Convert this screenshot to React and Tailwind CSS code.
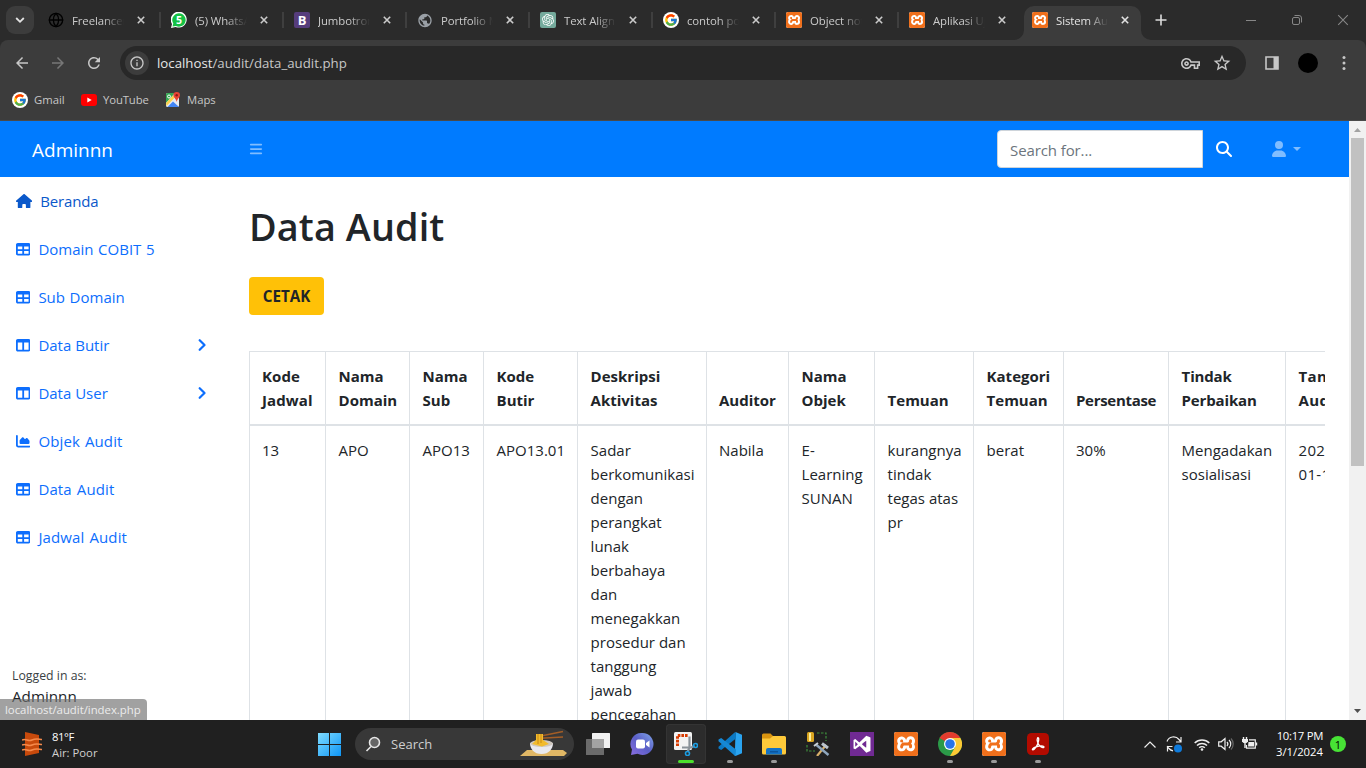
import React from 'react';
import { Globe } from 'lucide-react';
import { FcGoogle } from 'react-icons/fc';
import {
  MdPublic, MdArrowBack, MdArrowForward, MdRefresh, MdInfoOutline, MdOutlineVpnKey, MdStarBorder,
} from 'react-icons/md';
import { FaHouse, FaTable, FaTableColumns, FaChartArea, FaBars, FaMagnifyingGlass, FaUser } from 'react-icons/fa6';
import { SiXampp, SiOpenai } from 'react-icons/si';
import { DiVisualstudio } from 'react-icons/di';

function Xampp({ className }) {
  return (
    <span className={`flex items-center justify-center overflow-hidden bg-white ${className}`}>
      <SiXampp className="h-full w-full scale-[1.02] text-[#f0701c]" />
    </span>
  );
}

function GoogleDisc() {
  return (
    <span className="flex h-4 w-4 items-center justify-center rounded-full bg-white">
      <FcGoogle className="h-[14px] w-[14px]" />
    </span>
  );
}

function Whatsapp() {
  return (
    <svg viewBox="0 0 16 16" className="h-4 w-4">
      <path d="M0 16l1-4A8 8 0 1 1 4.600 15z" fill="#fff" />
      <path d="M1.500 14.600l.8-3A6.700 6.700 0 1 1 5 14z" fill="#14c144" />
      <text x="8.100" y="11.800" textAnchor="middle" fontSize="10.500" fontWeight="700" fontFamily="Open Sans, sans-serif" fill="#fff">5</text>
    </svg>
  );
}

const tabs = [
  { title: 'Freelancer', icon: <Globe className="h-4 w-4 text-black" strokeWidth={2} /> },
  { title: '(5) WhatsApp', icon: <Whatsapp /> },
  {
    title: 'Jumbotron',
    icon: <span className="flex h-4 w-4 items-center justify-center rounded-[2px] bg-[#563d7c] text-[13px] leading-none font-bold text-white">B</span>,
  },
  { title: 'Portfolio Me', icon: <MdPublic className="h-[17px] w-[17px] text-[#9aa0a6]" /> },
  {
    title: 'Text Align',
    icon: <span className="flex h-4 w-4 items-center justify-center rounded-[2px] bg-[#74aa9c]"><SiOpenai className="h-3 w-3 text-white" /></span>,
  },
  { title: 'contoh port', icon: <GoogleDisc /> },
  { title: 'Object not f', icon: <Xampp className="h-4 w-4 rounded-[2px]" /> },
  { title: 'Aplikasi Uji', icon: <Xampp className="h-4 w-4 rounded-[2px]" /> },
  { title: 'Sistem Audit', icon: <Xampp className="h-4 w-4 rounded-[2px]" />, active: true },
];

function Cross({ className }) {
  return (
    <svg viewBox="0 0 10 10" className={className} fill="none" stroke="currentColor">
      <path d="M1 1l8 8M9 1l-8 8" />
    </svg>
  );
}

function Tab({ tab, last }) {
  return (
    <div className={`relative mt-[6px] flex h-[34px] w-[123px] shrink-0 pb-[6px] ${tab.active ? 'text-[#e3e3e3]' : 'text-[#cbcbcb]'}`}>
      {tab.active && (
        <div className="absolute top-0 left-[-16px] flex h-[34px] w-[149px] items-end">
          <svg viewBox="0 0 10 10" className="ml-[6px] h-[10px] w-[10px] shrink-0"><path d="M10 0A10 10 0 0 1 0 10h10z" fill="#3c3c3c" /></svg>
          <span className="h-full w-[117px] rounded-t-[10px] bg-[#3c3c3c]" />
          <svg viewBox="0 0 10 10" className="h-[10px] w-[10px] shrink-0"><path d="M0 0A10 10 0 0 0 10 10H0z" fill="#3c3c3c" /></svg>
        </div>
      )}
      <div className="relative flex w-full items-center pl-2">
        <span className="flex h-4 w-4 items-center justify-center">{tab.icon}</span>
        <span className="ml-2 w-[52px] overflow-hidden pt-[2px] text-[11.4px] tracking-[-0.1px] whitespace-nowrap [mask-image:linear-gradient(to_right,black_60%,transparent_100%)]">{tab.title}</span>
        <Cross className="mr-px ml-[13px] h-2 w-2 stroke-[2]" />
        {!tab.active && !last && <span className="ml-[13px] h-4 w-[2px] bg-[#3f3f3f]" />}
        {!tab.active && last && <span className="ml-[13px] h-4 w-[2px] bg-[#2b2b2b]" />}
      </div>
    </div>
  );
}

function TabStrip() {
  return (
    <div className="flex h-10 w-full shrink-0 bg-[#2b2b2b] text-[#c7c7c7]">
      <span className="mt-[6px] ml-[6px] flex h-7 w-7 shrink-0 items-center justify-center rounded-[9px] bg-[#3c3c3c]">
        <svg viewBox="0 0 10 10" className="h-[10px] w-[10px]" fill="none" stroke="#e3e3e3" strokeWidth="1.800"><path d="M1.200 3l3.800 3.800L8.800 3" /></svg>
      </span>
      <div className="ml-[6px] flex">
        {tabs.map((t, i) => <Tab key={t.title} tab={t} last={i === tabs.length - 2} />)}
      </div>
      <svg viewBox="0 0 12 12" className="mt-[14px] ml-[8px] h-3 w-3" stroke="#dcdcdc" strokeWidth="1.600"><path d="M6 .5v11M.5 6h11" /></svg>
      <div className="mt-[14px] mr-[17px] ml-auto flex items-center gap-[34px] self-start text-[#878787]">
        <span className="mr-px h-px w-[10px] bg-current" />
        <svg viewBox="0 0 12 12" className="h-3 w-3" fill="none" stroke="currentColor"><rect x="1.500" y="3.500" width="7" height="7" rx="1.500" /><path d="M3.500 1.500H8A2.500 2.500 0 0 1 10.500 4v4.500" /></svg>
        <Cross className="h-3 w-3 stroke-[0.9]" />
      </div>
    </div>
  );
}

function Toolbar() {
  return (
    <div className="bg-[#2b2b2b]">
      <div className="flex h-[46px] items-start rounded-t-[8px] bg-[#3c3c3c] pt-[6px] text-[#c7c7c7]">
        <div className="flex h-[34px] w-[120px] items-center gap-[18px] pl-[13px]">
          <MdArrowBack className="h-[18px] w-[18px]" />
          <MdArrowForward className="h-[18px] w-[18px] text-[#777]" />
          <MdRefresh className="h-[18px] w-[18px]" />
        </div>
        <div className="flex h-[34px] w-[1126px] items-center rounded-full bg-[#282828] pr-[14px] pl-[5px]">
          <span className="flex h-6 w-6 items-center justify-center rounded-full bg-[#3c3c3c]"><MdInfoOutline className="h-4 w-4" /></span>
          <span className="ml-2 pt-px text-[13.25px] text-[#c7c7c7]"><span className="text-[#e6e6e6]">localhost</span>/audit/data_audit.php</span>
          <MdOutlineVpnKey className="ml-auto h-[19px] w-[19px]" />
          <MdStarBorder className="ml-[12px] h-5 w-5" />
        </div>
        <div className="flex h-[34px] flex-1 items-center pl-[19px]">
          <svg viewBox="0 0 14 14" className="h-[14px] w-[14px]"><path d="M1 1h12v12H1z" fill="none" stroke="currentColor" strokeWidth="1.600" /><path d="M8.500 1H13v12H8.500z" fill="currentColor" /></svg>
          <span className="ml-[19px] h-5 w-5 rounded-full bg-black" />
          <svg viewBox="0 0 4 16" className="ml-[24px] h-4 w-1" fill="currentColor"><circle cx="2" cy="2.500" r="1.500" /><circle cx="2" cy="8" r="1.500" /><circle cx="2" cy="13.500" r="1.500" /></svg>
        </div>
      </div>
      <div className="flex h-[35px] items-center border-b border-[#4a4a4a] bg-[#3c3c3c] pb-[6px] pl-3 text-[11.3px] text-[#c7c7c7]">
        <GoogleDisc />
        <span className="ml-[6px] w-[47px]">Gmail</span>
        <svg viewBox="0 0 16 12" className="h-3 w-4"><rect width="16" height="12" rx="3" fill="#f00" /><path d="M6.300 3.500v5L10.700 6z" fill="#fff" /></svg>
        <span className="ml-[6px] w-[62px] tracking-[-0.1px]">YouTube</span>
        <svg viewBox="0 0 16 16" className="h-4 w-4">
          <rect x="1" y="1" width="13" height="14" rx="1.500" fill="#e8eaed" />
          <path d="M1 2.500A1.500 1.500 0 0 1 2.500 1H10L1 11z" fill="#34a853" />
          <path d="M2.500 15L8 9.500l6 5.500z" fill="#4285f4" />
          <path d="M1 11l7-7.500 2 2L1.500 14z" fill="#fbd24b" />
          <circle cx="4" cy="4.500" r="1.500" fill="none" stroke="#fff" />
          <path d="M11.700 0a3.300 3.300 0 0 0-3.300 3.300C8.400 5.500 11 6.500 11.700 10c.7-3.500 3.300-4.500 3.300-6.700A3.300 3.300 0 0 0 11.700 0z" fill="#ea4335" /><circle cx="11.700" cy="3.300" r="1.200" fill="#8c1d14" />
        </svg>
        <span className="ml-[6px]">Maps</span>
      </div>
    </div>
  );
}

function Navbar() {
  return (
    <nav className="flex h-14 shrink-0 items-center bg-[#007bff]">
      <span className="w-[249px] pt-[2px] pl-8 text-[19px] text-white">Adminnn</span>
      <FaBars className="h-[14px] w-[14px] text-white/50" />
      <div className="ml-auto flex h-[38px] w-[206px] items-center rounded-l-[4px] border border-[#ced4da] bg-white pt-[2px] pl-3 text-[15px] tracking-[-0.1px] text-[#6c757d]">Search for...</div>
      <FaMagnifyingGlass className="ml-[13px] h-4 w-4 text-white" />
      <FaUser className="ml-[39px] h-4 w-4 text-white/50" />
      <svg viewBox="0 0 8 4" className="mr-[48px] ml-[6px] h-1 w-2"><path d="M0 0h8L4 4z" fill="#fff" fillOpacity=".5" /></svg>
    </nav>
  );
}

const menu = [
  { label: 'Beranda', Icon: FaHouse, home: true },
  { label: 'Domain COBIT 5', Icon: FaTable },
  { label: 'Sub Domain', Icon: FaTable },
  { label: 'Data Butir', Icon: FaTableColumns, sub: true },
  { label: 'Data User', Icon: FaTableColumns, sub: true },
  { label: 'Objek Audit', Icon: FaChartArea, audit: true },
  { label: 'Data Audit', Icon: FaTable, audit: true },
  { label: 'Jadwal Audit', Icon: FaTable, audit: true },
];

function Sidebar() {
  return (
    <aside className="relative flex w-[225px] shrink-0 flex-col">
      {menu.map(({ label, Icon, home, sub, audit }) => (
        <a key={label} className={`flex h-12 items-center pl-4 text-[15px] ${home ? 'tracking-[-0.15px] text-[#0a58ca]' : 'text-[#0d6efd]'} ${audit ? 'tracking-[0.12px] [word-spacing:1px]' : ''} ${!audit && !sub ? '[word-spacing:0.7px]' : ''}`}>
          <Icon className={`mr-2 h-[14.4px] ${home ? 'w-[16.2px]' : 'w-[14.4px]'}`} />
          {label}
          {sub && <svg viewBox="0 0 8 12" className="mr-[19px] ml-auto h-3 w-2" fill="none" stroke="currentColor" strokeWidth="2.200" strokeLinecap="round" strokeLinejoin="round"><path d="M1.700 1.200L6.500 6l-4.800 4.800" /></svg>}
        </a>
      ))}
      <div className="mt-auto pb-3 pl-3 text-[#212529]">
        <div className="pt-[3px] text-[12.3px] leading-[17px] text-[#3a3f44]">Logged in as:</div>
        <div className="text-[15.2px] leading-6">Adminnn</div>
      </div>
      <div className="absolute bottom-0 left-0 flex h-[21px] w-[147px] items-center rounded-tr-[4px] bg-[#6e6e6e]/65 pl-[5px] text-[11.4px] tracking-[-0.03px] whitespace-nowrap text-[#ececec]">localhost/audit/index.php</div>
    </aside>
  );
}

const columns = [
  { w: 'w-[76px]', head: ['Kode', 'Jadwal'], cell: ['13'], tight: 'tracking-[0.1px]' },
  { w: 'w-[84px]', head: ['Nama', 'Domain'], cell: ['APO'] },
  { w: 'w-[74px]', head: ['Nama', 'Sub'], cell: ['APO13'] },
  { w: 'w-[94px]', head: ['Kode', 'Butir'], cell: ['APO13.01'] },
  { w: 'w-[129px]', head: ['Deskripsi', 'Aktivitas'], cell: ['Sadar', 'berkomunikasi', 'dengan', 'perangkat', 'lunak', 'berbahaya', 'dan', 'menegakkan', 'prosedur dan', 'tanggung', 'jawab', 'pencegahan'] },
  { w: 'w-[82px]', head: ['Auditor'], cell: ['Nabila'], pad: 'pl-3' },
  { w: 'w-[86px]', head: ['Nama', 'Objek'], cell: ['E-', 'Learning', 'SUNAN'] },
  { w: 'w-[99px]', head: ['Temuan'], cell: ['kurangnya', 'tindak', 'tegas atas', 'pr'] },
  { w: 'w-[90px]', head: ['Kategori', 'Temuan'], cell: ['berat'] },
  { w: 'w-[105px]', head: ['Persentase'], cell: ['30%'], tight: 'tracking-[-0.3px]', pad: 'pl-3' },
  { w: 'w-[117px]', head: ['Tindak', 'Perbaikan'], cell: ['Mengadakan', 'sosialisasi'], tight: 'tracking-[-0.15px]' },
  { w: 'w-[100px]', head: ['Tanggal', 'Audit'], cell: ['2024-', '01-16'], tight: 'tracking-[0.3px]' },
];

function AuditTable() {
  return (
    <div className="mt-9 overflow-hidden">
      <table className="w-[1136px] table-fixed border-separate border-spacing-0 text-left text-[15px] leading-6 whitespace-nowrap text-[#212529]">
        <colgroup>{columns.map((c, i) => <col key={i} className={c.w} />)}</colgroup>
        <thead>
          <tr>
            {columns.map((c, i) => (
              <th key={i} className={`border-t border-b-2 border-l border-[#dee2e6] py-3 align-bottom font-bold ${i === 0 ? 'pl-3' : c.pad || 'pl-[12.6px]'} ${c.tight || ''}`}>
                {c.head.map((l) => <div key={l}>{l}</div>)}
              </th>
            ))}
          </tr>
        </thead>
        <tbody>
          <tr>
            {columns.map((c, i) => (
              <td key={i} className={`border-l border-[#dee2e6] py-3 align-top ${i === 0 ? 'pl-3' : c.pad || 'pl-[12.6px]'} ${i > 10 ? 'tracking-[0.3px]' : ''}`}>
                {c.cell.map((l) => <div key={l}>{l}</div>)}
              </td>
            ))}
          </tr>
        </tbody>
      </table>
    </div>
  );
}

function Scrollbar() {
  return (
    <div className="flex w-[17px] shrink-0 flex-col items-center bg-[#f1f1f1]">
      <svg viewBox="0 0 17 17" className="h-[17px] w-[17px]"><path d="M5 11l3.500-4 3.500 4z" fill="#a3a3a3" /></svg>
      <span className="h-[328px] w-[13px] bg-[#c1c1c1]" />
      <svg viewBox="0 0 17 17" className="mt-auto h-[17px] w-[17px]"><path d="M5 6l3.500 4L12 6z" fill="#505050" /></svg>
    </div>
  );
}

function Chat() {
  return (
    <svg viewBox="0 0 24 24" className="h-6 w-6">
      <defs><linearGradient id="chat" x1="0" y1="1" x2="1" y2="0"><stop stopColor="#8a6ee0" /><stop offset=".5" stopColor="#5b5fc7" /><stop offset="1" stopColor="#7fa5e8" /></linearGradient></defs>
      <path d="M12.500 1a11 11 0 1 1-5 20.800L1 23l1-5.500A11 11 0 0 1 12.500 1z" fill="url(#chat)" />
      <rect x="6" y="7.500" width="9" height="9" rx="2" fill="#fff" /><path d="M16 11l3.500-2.500v7L16 13z" fill="#fff" />
    </svg>
  );
}

function Snip() {
  return (
    <svg viewBox="0 0 24 24" className="h-6 w-6">
      <rect x="0" y="0" width="18" height="18" rx="1.500" fill="#f3f3f3" />
      <path d="M3.500 14V3.500H14" fill="none" stroke="#d83b01" strokeWidth="3" strokeDasharray="2.600 1" />
      <path d="M15.500 4.500v11L13.500 20M8 15.500h9.500l3-2" fill="none" stroke="#8a9299" strokeWidth="2.200" />
      <circle cx="13.500" cy="21.500" r="2" fill="none" stroke="#1b9de2" strokeWidth="1.600" /><circle cx="21.500" cy="13.500" r="2" fill="none" stroke="#1b9de2" strokeWidth="1.600" />
    </svg>
  );
}

function Code() {
  return (
    <svg viewBox="0 0 24 24" className="h-6 w-6">
      <path d="M17.500 0L24 2.800v18.400L17.500 24l-1.200-.8L17 17z" fill="#2aa4f0" />
      <path d="M16.300.8L17.500 0l.5 6.500L3.200 18 .5 16.500v-1.800z" fill="#0b79c4" />
      <path d="M.5 7.500L3.200 6 18 17.500l-.5 6.500-1.200-.8L.5 9.300z" fill="#1688d4" />
    </svg>
  );
}

function Explorer() {
  return (
    <svg viewBox="0 0 24 24" className="h-6 w-6">
      <path d="M0 3a1.500 1.500 0 0 1 1.500-1.500h7L11 4v4H0z" fill="#d99410" />
      <path d="M0 6.500h8L11 4h11.500A1.500 1.500 0 0 1 24 5.500V21a1.500 1.500 0 0 1-1.500 1.500h-21A1.500 1.500 0 0 1 0 21z" fill="#fdc93a" />
      <path d="M4 22.500V18a2 2 0 0 1 2-2h12a2 2 0 0 1 2 2v4.500z" fill="#1372c5" /><path d="M8 19h8v1.500H8z" fill="#0b559c" />
    </svg>
  );
}

function DbTools() {
  return (
    <svg viewBox="0 0 24 24" className="h-6 w-6">
      <rect x="1" y="0" width="7" height="10" rx="1.500" fill="#d9a520" /><path d="M3 1h2v8H3z" fill="#ffef9c" />
      <path d="M11 1h9v8M1 13v6h8" fill="none" stroke="#3f8f3d" strokeWidth="1.200" strokeDasharray="2.500 1.500" />
      <path d="M11 24l9-11" stroke="#d8b06a" strokeWidth="2.200" /><path d="M10.500 13l12 10" stroke="#8fa6bd" strokeWidth="2.400" />
      <path d="M16 11.500l6 4.500" stroke="#b9c3cd" strokeWidth="3" /><path d="M8 14l4-3" stroke="#c9d0d7" strokeWidth="2" />
    </svg>
  );
}

function Chrome() {
  return (
    <svg viewBox="0 0 24 24" className="h-6 w-6">
      <circle cx="12" cy="12" r="12" fill="#2b9a48" />
      <path d="M12 12L1.600 6A12 12 0 0 1 22.400 6z" fill="#e33b2e" />
      <path d="M12 6h10.400A12 12 0 0 1 12 24l5.200-9z" fill="#fcc934" />
      <circle cx="12" cy="12" r="6" fill="#fff" /><circle cx="12" cy="12" r="4.800" fill="#2a74e8" />
    </svg>
  );
}

function Acrobat() {
  return (
    <svg viewBox="0 0 22 22" className="h-[22px] w-[22px]">
      <rect width="22" height="22" rx="4.500" fill="#b30b00" />
      <path d="M10.600 4.800c1.600-.6 1.300 2.600.4 5.200-.9 2.700-3.400 6.800-5 6.900-1.600-.2 0-2.200 3-3.100 3-.9 7-1.200 7.900-.1.500 1.200-2 1.200-3.800-.5-1.800-1.600-3.900-5.800-2.500-8.400z" fill="none" stroke="#fff" strokeWidth="1.300" />
    </svg>
  );
}

const apps = [
  { icon: <svg viewBox="0 0 24 24" className="h-6 w-6"><rect x="6" y="1" width="18" height="15" rx=".5" fill="#f0f0f0" /><rect x="0" y="7" width="18" height="16" rx=".5" fill="#6b6b6b" /><path d="M6 7h12v9H6z" fill="#a3a3a3" /></svg> },
  { icon: <Chat /> },
  { icon: <Snip />, active: true },
  { icon: <Code />, open: true },
  { icon: <Explorer />, open: true },
  { icon: <DbTools /> },
  { icon: <span className="flex h-6 w-6 items-center justify-center bg-[#702a93] text-white"><DiVisualstudio className="h-6 w-6" /></span> },
  { icon: <Xampp className="h-6 w-6 rounded-[2px]" /> },
  { icon: <Chrome />, open: true },
  { icon: <Xampp className="h-6 w-6 rounded-[2px]" />, open: true },
  { icon: <Acrobat />, open: true },
];

function Taskbar() {
  return (
    <footer className="flex h-12 shrink-0 items-center bg-[#202020] text-[11.3px] text-white">
      <svg viewBox="0 0 20 24" className="ml-[22px] h-6 w-5">
        <path d="M3 0l14 3v18L3 24z" fill="#c84a0c" />
        <path d="M0 8c4-2 6 2 10 0s6-1 10-.5M0 13c4-2 6 2 10 0s6-1 10-.5M0 18c4-2 6 2 10 0s6-1 10-.5" stroke="#f58a4b" strokeWidth="1.500" fill="none" />
      </svg>
      <div className="ml-[10px] w-[266px] pt-[2px] leading-4"><div className="font-medium tracking-[-0.4px]">81°F</div><div className="text-[#d0d0d0]">Air: Poor</div></div>
      <svg viewBox="0 0 23 23" className="h-[23px] w-[23px] shrink-0">
        <defs><linearGradient id="win" x1="0" y1="0" x2="1" y2="1"><stop stopColor="#7fdcff" /><stop offset="1" stopColor="#0e95f5" /></linearGradient></defs>
        <path d="M0 0h11v11H0zM12 0h11v11H12zM0 12h11v11H0zM12 12h11v11H12z" fill="url(#win)" />
      </svg>
      <div className="ml-[14px] flex h-8 w-[219px] shrink-0 items-center rounded-full bg-[#383838] pr-[6px] pl-[10px]">
        <svg viewBox="0 0 16 16" className="h-4 w-4" fill="#666" stroke="#e6e6e6" strokeWidth="1.600"><circle cx="9.500" cy="6.500" r="5" /><path d="M6 10.500L1.500 15" /></svg>
        <span className="ml-[10px] pt-[2px] text-[13px] text-[#cfcfcf]">Search</span>
        <svg viewBox="0 0 48 28" className="ml-auto h-7 w-12">
          <path d="M7 20h36l4 3-3 3H0z" fill="#e0b765" />
          <path d="M16 7L43 1.500M16 8.500l27-1.500" stroke="#a35d26" strokeWidth="1.600" />
          <path d="M10 13h23c0 6-4 11-11.500 11S10 19 10 13z" fill="#e9e9ee" /><ellipse cx="21.500" cy="13.500" rx="11.500" ry="3.500" fill="#cfc8c0" />
          <path d="M12 14l4-4V4h7v6l6 4-7 2.500z" fill="#f2bb2c" /><path d="M18 4v10M21 4v9" stroke="#c98812" />
        </svg>
      </div>
      <div className="ml-[2px] flex">
        {apps.map((a, i) => (
          <div key={i} className="flex w-11 justify-center">
            <div className={`relative flex h-10 w-10 items-center justify-center rounded-[4px] ${a.active ? 'bg-[#2c2c2c] ring-1 ring-[#343434] ring-inset' : ''}`}>
              {a.icon}
              {a.open && <span className="absolute bottom-px h-[3px] w-[6px] rounded-full bg-[#9a9a9a]" />}
              {a.active && <span className="absolute bottom-px h-[3px] w-4 rounded-full bg-[#4be02c]" />}
            </div>
          </div>
        ))}
      </div>
      <div className="mr-[20px] ml-auto flex items-center">
        <svg viewBox="0 0 12 7" className="h-[7px] w-3" fill="none" stroke="#eee" strokeWidth="1.200"><path d="M.5 6.500L6 1l5.500 5.500" /></svg>
        <svg viewBox="0 0 18 18" className="ml-[9px] h-[18px] w-[18px]" fill="none" stroke="#eee" strokeWidth="1.200"><path d="M2 6.500a7 7 0 0 1 12-2L16 7M16 2v5h-5M8 15.800a7 7 0 0 1-4-2.300L2 11M2.500 16.500v-5h5" /><circle cx="13" cy="13.500" r="4" fill="#0f7bdb" stroke="none" /></svg>
        <svg viewBox="0 0 16 13" className="ml-[11px] h-[13px] w-4" fill="none" stroke="#eee" strokeWidth="1.500"><path d="M.7 5a10.300 10.300 0 0 1 14.600 0M3 7.500a7 7 0 0 1 10 0M5.200 9.800a4 4 0 0 1 5.600 0" /><circle cx="8" cy="11.500" r="1.300" fill="#eee" stroke="none" /></svg>
        <svg viewBox="0 0 16 14" className="ml-[8px] h-[14px] w-4" fill="none" stroke="#eee" strokeWidth="1.200"><path d="M.7 4.800h2.500L7 1.500v11L3.200 9.200H.7zM9 5a3 3 0 0 1 0 4M11 3a5.500 5.500 0 0 1 0 8" /><path d="M13 1.500a8 8 0 0 1 0 11" stroke="#666" /></svg>
        <svg viewBox="0 0 16 14" className="ml-[8px] h-[14px] w-4" fill="none" stroke="#eee" strokeWidth="1.200"><path d="M7 2.800h6.300v8.400H4.500V8" /><path d="M6.500 5H12v4.500H6z" fill="#eee" stroke="none" /><path d="M14.500 5.500v3M1.500 0v2M4.500 0v2M3 6v5" strokeWidth="1.400" /><path d="M0 2h6v2.500L4.500 6h-3L0 4.500z" fill="#eee" stroke="none" /></svg>
        <div className="mr-[-1px] ml-[18px] text-right leading-4"><div className="tracking-[-0.3px]">10:17 PM</div><div>3/1/2024</div></div>
        <span className="ml-2 flex h-4 w-4 items-center justify-center rounded-full bg-[#47e235] text-[11px] leading-none text-black">1</span>
      </div>
    </footer>
  );
}

export default function App() {
  return (
    <div className="flex h-[768px] w-[1366px] flex-col overflow-hidden bg-white font-['Open_Sans','Noto_Sans',sans-serif]">
      <TabStrip />
      <Toolbar />
      <div className="flex min-h-0 flex-1">
        <div className="flex min-w-0 flex-1 flex-col">
          <Navbar />
          <div className="flex min-h-0 flex-1">
            <Sidebar />
            <main className="min-w-0 flex-1 overflow-hidden px-6 pt-6">
              <h1 className="h-[52px] text-[37.8px] leading-[52px] font-semibold tracking-[0.1px] text-[#212529]">Data Audit</h1>
              <button className="mt-6 flex h-[38px] w-[75px] items-center justify-center rounded-[4px] bg-[#ffc107] text-[15.2px] font-bold text-[#212529]">CETAK</button>
              <AuditTable />
            </main>
          </div>
        </div>
        <Scrollbar />
      </div>
      <Taskbar />
    </div>
  );
}
